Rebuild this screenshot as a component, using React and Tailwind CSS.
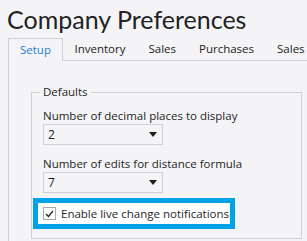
import React from 'react';

const Caret = () => (
  <svg width="8" height="5" viewBox="0 0 8 5" className="shrink-0">
    <path d="M0 0 L8 0 L4 5 Z" fill="#1f1f1f" />
  </svg>
);

const Combo = ({ value }) => (
  <div className="flex items-center justify-between w-[120px] h-[21px] border border-[#cfcfd8] bg-[#f4f4f7] pl-[4px] pr-[5px]">
    <span className="text-[12px] leading-[16px] text-[#1f1f1f]">{value}</span>
    <Caret />
  </div>
);

const tabs = ['Setup', 'Inventory', 'Sales', 'Purchases', 'Sales'];

export default function App() {
  return (
    <div
      className="w-[307px] h-[241px] overflow-hidden bg-[#f4f4f7] text-[#1f1f1f] text-[11.5px] flex flex-col"
      style={{ fontFamily: '"Open Sans", "Noto Sans", sans-serif' }}
    >
      {/* Title */}
      <h1
        className="pl-[7px] pt-[3px] h-[38px] shrink-0 text-[25px] leading-[32px] font-normal text-[#222] whitespace-nowrap"
        style={{ fontFamily: 'Lato, "Open Sans", sans-serif' }}
      >
        Company Preferences
      </h1>

      {/* Tabs */}
      <div className="flex pl-[8px] h-[23px] shrink-0 whitespace-nowrap">
        {tabs.map((t, i) =>
          i === 0 ? (
            <div
              key={i}
              className="px-[11px] h-[23px] border border-b-0 border-[#cfcfd8] leading-[22px] text-[#1b7fd0]"
            >
              {t}
            </div>
          ) : (
            <div
              key={i}
              className="px-[11.5px] h-[23px] border-b border-[#cfcfd8] leading-[22px] text-[#222]"
            >
              {t}
            </div>
          )
        )}
        <div className="flex-1 border-b border-[#cfcfd8]" />
      </div>

      {/* Tab panel */}
      <div className="flex-1 ml-[8px] border-l border-[#cfcfd8] pl-[22px] pt-[23px] min-h-0">
        <fieldset className="w-[271px] h-[155px] border border-[#cfcfd8] pl-[11px] pr-[10px] pt-[8px] m-0">
          <legend className="ml-[-3px] px-[3px] leading-[16px]">Defaults</legend>

          <div className="leading-[16px] whitespace-nowrap">Number of decimal places to display</div>
          <Combo value="2" />

          <div className="mt-[11px] leading-[16px] whitespace-nowrap">Number of edits for distance formula</div>
          <Combo value="7" />

          <div className="mt-[5px] ml-[-10px] w-[202px] h-[31px] border-[5px] border-[#00a2e8] bg-white flex items-center pl-[5px] gap-[5px]">
            <div className="w-[13px] h-[13px] border border-[#a8a8b0] bg-white flex items-center justify-center">
              <svg width="9" height="8" viewBox="0 0 9 8">
                <path d="M1 4 L3.5 6.5 L8 1" stroke="#222" strokeWidth="1.3" fill="none" />
              </svg>
            </div>
            <span className="leading-[16px] whitespace-nowrap">Enable live change notifications</span>
          </div>
        </fieldset>
      </div>
    </div>
  );
}
